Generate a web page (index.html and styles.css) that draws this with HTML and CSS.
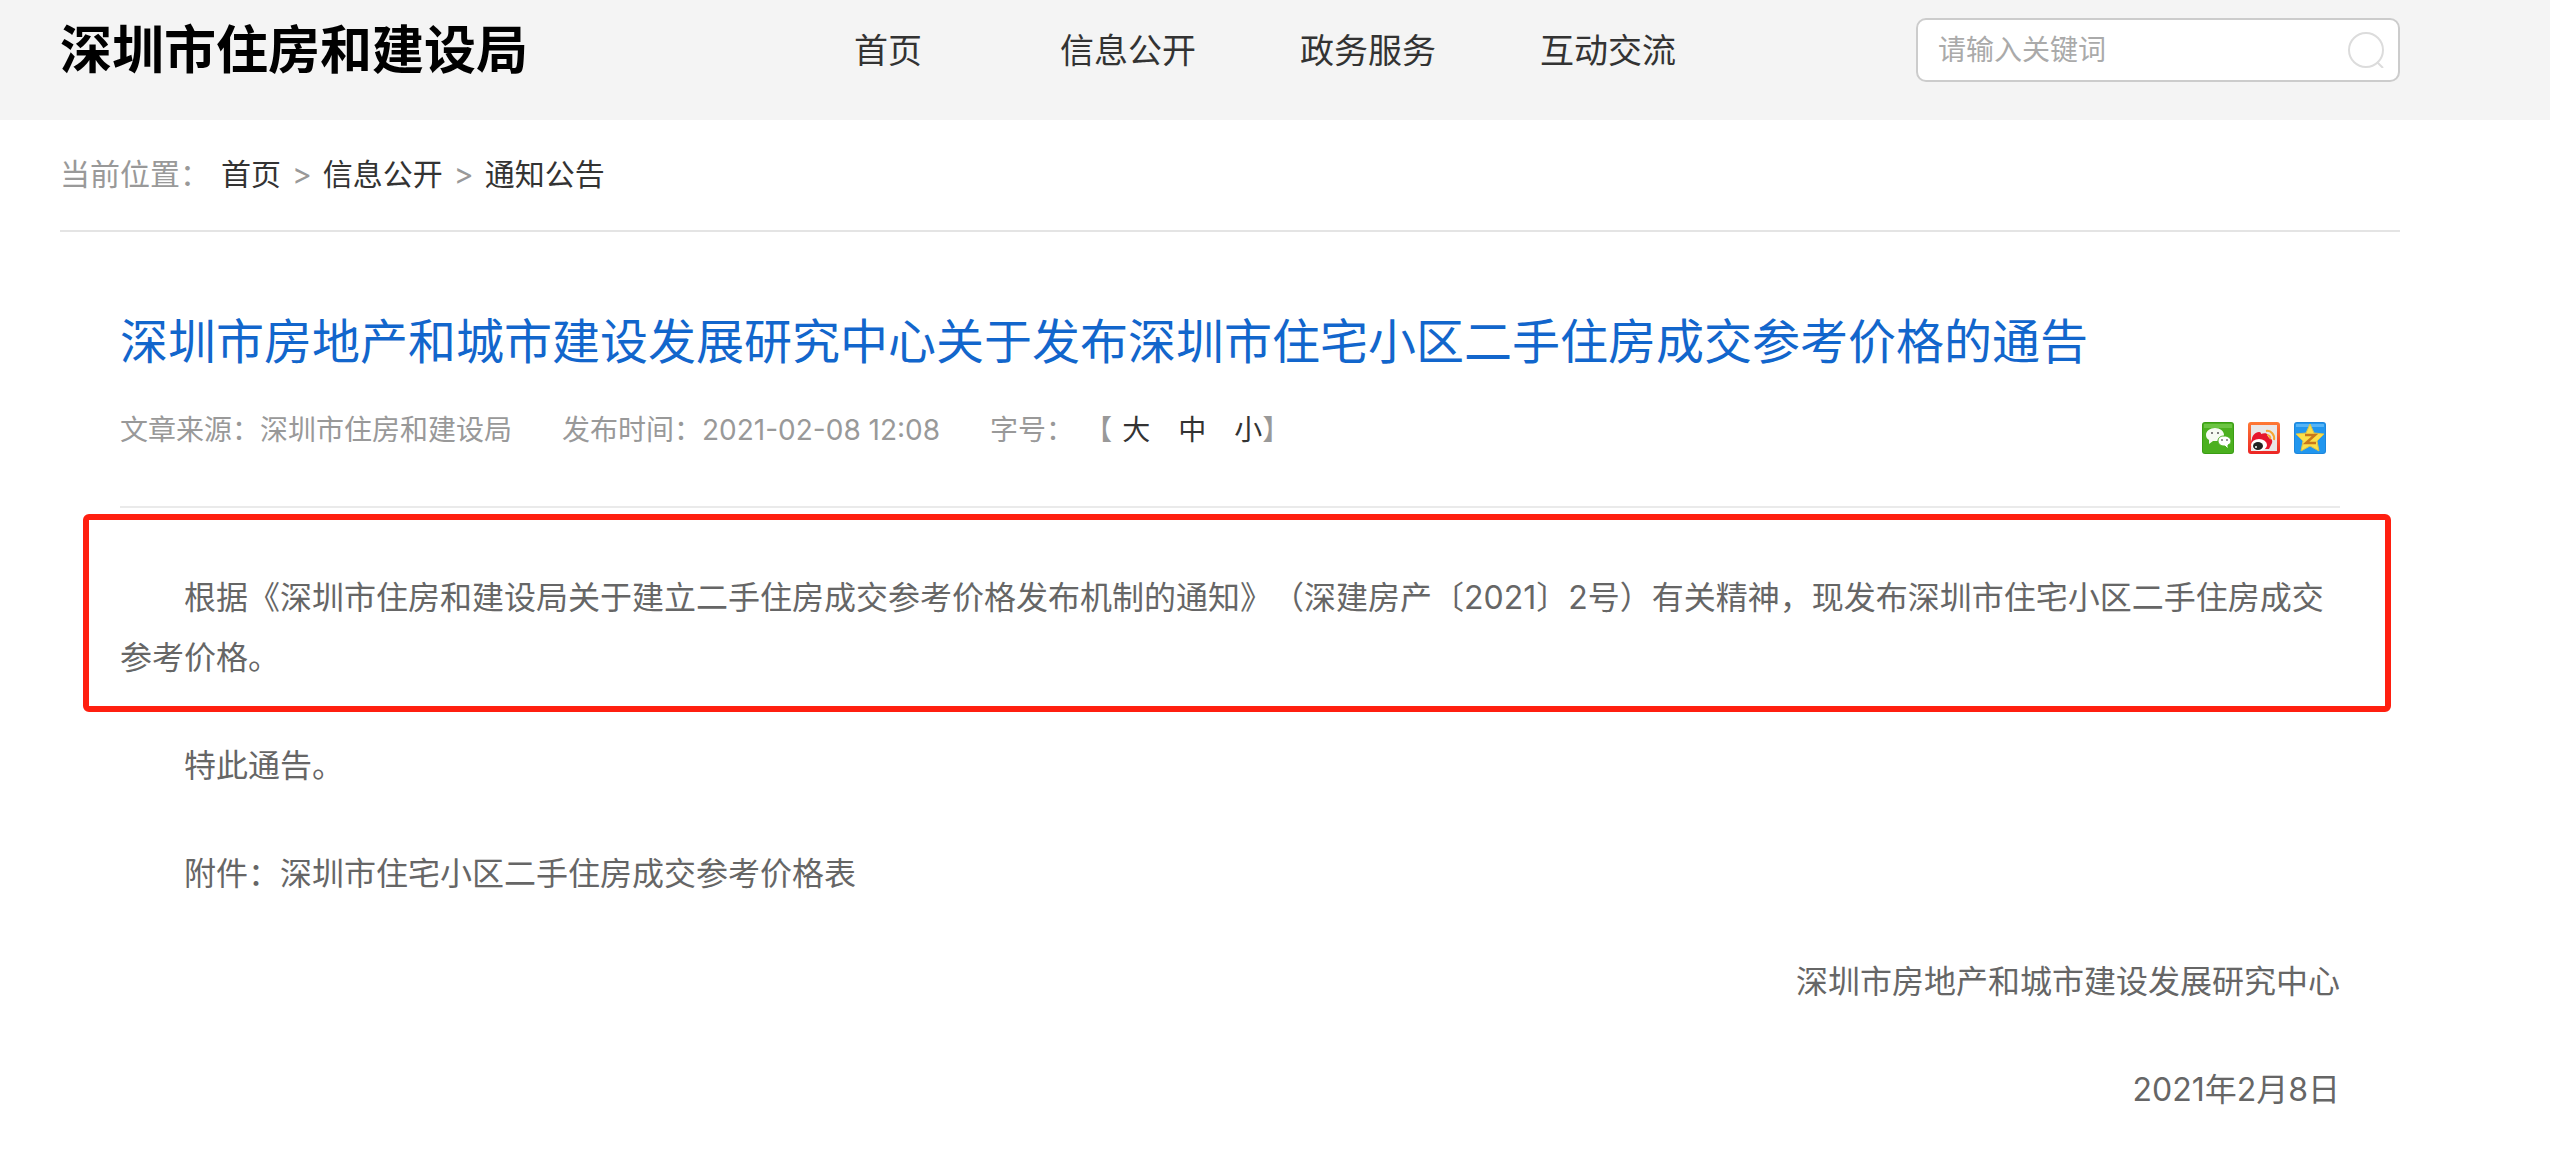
FILE: index.html
```html
<!DOCTYPE html>
<html lang="zh-CN">
<head>
  <meta charset="UTF-8" />
  <title>深圳市住房和建设局</title>
  <link rel="stylesheet" href="styles.css">
</head>
<body>
  <header class="header">
    <a class="logo" href="#">深圳市住房和建设局</a>
    <nav class="nav">
      <a href="#">首页</a>
      <a href="#">信息公开</a>
      <a href="#">政务服务</a>
      <a href="#">互动交流</a>
    </nav>
    <form class="search">
      <input type="text" placeholder="请输入关键词" aria-label="请输入关键词">
      <button type="button" aria-label="搜索">
        <svg viewBox="0 0 36 36" width="36" height="36" fill="none" stroke="#dcdcdc" stroke-width="2">
          <ellipse cx="18" cy="18" rx="17" ry="17"/>
          <path d="M29 30l6 6"/>
        </svg>
      </button>
    </form>
  </header>

  <main class="main">
    <div class="crumbs">
      <span>当前位置：</span>
      <a href="#">首页</a>
      <span>&gt;</span>
      <a href="#">信息公开</a>
      <span>&gt;</span>
      <a href="#">通知公告</a>
    </div>

    <article class="article">
      <h1>深圳市房地产和城市建设发展研究中心关于发布深圳市住宅小区二手住房成交参考价格的通告</h1>

      <div class="meta">
        <span>文章来源：深圳市住房和建设局</span>
        <span>发布时间：2021-02-08 12:08</span>
        <div class="font-size">
          <span>字号：</span>
          <span class="bracket">【</span>
          <div class="sizes">
            <button type="button">大</button>
            <button type="button">中</button>
            <button type="button">小</button>
          </div>
          <span>】</span>
        </div>
        <div class="share">
          <!-- wechat -->
          <a href="#" aria-label="微信">
            <svg viewBox="0 0 32 32" width="32" height="32">
              <rect width="32" height="32" rx="3" fill="#3a9d14"/>
              <rect x="1" y="1" width="30" height="30" rx="2" fill="#4bb01f"/>
              <path d="M2 2h28v4H2z" fill="#6cc443"/>
              <path d="M13 6c-5 0-9 3-9 7 0 2 1 4 3 5l0 4 4-3h4c4-1 7-3 7-6 0-4-4-7-9-7z" fill="#f6fbf3"/>
              <path d="M22 14c-4 0-6 2-6 5s3 5 6 5h1l3 3v-4c2-1 3-2 3-4 0-3-3-5-7-5z" fill="#fff" stroke="#4bb01f"/>
              <circle cx="10" cy="11" r="1" fill="#555"/>
              <circle cx="16" cy="11" r="1" fill="#555"/>
              <circle cx="20" cy="18" r="1" fill="#777"/>
              <circle cx="25" cy="18" r="1" fill="#777"/>
            </svg>
          </a>
          <!-- weibo -->
          <a href="#" aria-label="微博">
            <svg viewBox="0 0 32 32" width="32" height="32">
              <defs>
                <linearGradient id="weiboEdge" x1="0" y1="0" x2="0" y2="1">
                  <stop offset="0" stop-color="#ff7a35"/>
                  <stop offset="1" stop-color="#ec2525"/>
                </linearGradient>
              </defs>
              <rect width="32" height="32" rx="3" fill="url(#weiboEdge)"/>
              <rect x="3" y="3" width="26" height="26" fill="#e9e7e7"/>
              <path d="M4 17c0-3 3-7 7-7 2 0 2 1 2 2 3-1 6-1 7 1v2c3 1 5 3 4 6l-3 6H6c-3-1-4-6-2-10z" fill="#e6162d"/>
              <ellipse cx="11" cy="23" rx="8" ry="6" fill="#fff"/>
              <ellipse cx="10" cy="24" rx="5" ry="4" fill="#222"/>
              <circle cx="8" cy="25" r="1" fill="#fff"/>
              <path d="M18 9c5-1 9 4 8 9M19 13c2 0 4 2 3 4" fill="none" stroke="#f7a531" stroke-width="2"/>
            </svg>
          </a>
          <!-- qzone -->
          <a href="#" aria-label="QQ空间">
            <svg viewBox="0 0 32 32" width="32" height="32">
              <rect width="32" height="32" rx="3" fill="#1c86dc"/>
              <rect x="1" y="1" width="30" height="30" rx="2" fill="#2196ee"/>
              <path d="M2 2h28v3H2z" fill="#56b4f6"/>
              <path d="M16 2l4 9 10 1-7 7 2 10-9-5-9 5 2-10-7-7 10-1z" fill="#fcdf48" stroke="#d9c34c"/>
              <path d="M11 13h10l-9 8h10" fill="none" stroke="#c9781a" stroke-width="2.5"/>
            </svg>
          </a>
        </div>
      </div>

      <div class="content">
        <div class="highlight">
          <p>根据《深圳市住房和建设局关于建立二手住房成交参考价格发布机制的通知》（深建房产〔2021〕2号）有关精神，现发布深圳市住宅小区二手住房成交参考价格。</p>
        </div>
        <p>特此通告。</p>
        <p>附件：深圳市住宅小区二手住房成交参考价格表</p>
        <p class="sign">深圳市房地产和城市建设发展研究中心</p>
        <p class="sign">2021年2月8日</p>
      </div>
    </article>
  </main>
</body>
</html>
```
FILE: styles.css
```css
* {
  box-sizing: border-box;
}
body {
  margin: 0;
  background: #fff;
  color: #666;
  font-family: Inter, "Noto Sans CJK SC", sans-serif;
  font-size: 32px;
  text-spacing-trim: space-all;
}
a {
  color: #333;
  text-decoration: none;
}
button {
  padding: 0;
  border: none;
  background: none;
  font: inherit;
  color: #333;
  cursor: pointer;
}
svg {
  display: block;
}

.header {
  display: grid;
  grid-template-columns: 794fr 1062fr 484fr;
  align-items: center;
  padding: 18px 150px 38px 60px;
  background: #f4f4f4;
}
.logo {
  padding-top: 2px;
  font-size: 52px;
  font-weight: 700;
  line-height: 62px;
  color: #000;
  white-space: nowrap;
}
.nav {
  display: flex;
  gap: 104px;
  padding-top: 2px;
  font-size: 34px;
  line-height: 62px;
  white-space: nowrap;
}
.nav a:first-child {
  min-width: 102px;
}
.search {
  display: flex;
  align-items: center;
  min-width: 0;
  height: 64px;
  padding: 0 14px 0 20px;
  border: 2px solid #ccc;
  border-radius: 10px;
  background: #fff;
}
.search input {
  flex: 1;
  min-width: 0;
  padding: 0;
  border: none;
  outline: none;
  background: none;
  font: inherit;
  font-size: 28px;
}
.search input::placeholder {
  color: #aaa;
}

.main {
  margin: 0 150px 0 60px;
}
.crumbs {
  display: flex;
  gap: 11px;
  padding: 34px 0 36px;
  border-bottom: 2px solid #e4e4e4;
  font-size: 30px;
  line-height: 40px;
  color: #999;
}

.article {
  padding: 80px 60px 0;
}
h1 {
  margin: 0;
  font-size: 48px;
  font-weight: 400;
  line-height: 60px;
  color: #1266cc;
}
.meta {
  display: flex;
  gap: 50px;
  padding: 38px 14px 52px 0;
  border-bottom: 2px solid #eaeaea;
  font-size: 28px;
  line-height: 40px;
  color: #999;
}
.font-size {
  display: flex;
  align-items: baseline;
}
.bracket {
  margin: 0 10px;
}
.sizes {
  display: flex;
  gap: 28px;
}
.share {
  display: flex;
  gap: 14px;
  margin-left: auto;
  padding-top: 12px;
}

.content {
  padding-top: 6px;
  line-height: 60px;
}
.content p {
  margin: 0 0 48px;
  text-indent: 2em;
}
.content p:last-child {
  margin-bottom: 0;
}
/* red frame reaches past the text column on both sides */
.highlight {
  margin: 0 -51px 24px -37px;
  padding: 48px 45px 18px 31px;
  border: 6px solid #ff1f10;
  border-radius: 6px;
}
.content .sign {
  text-align: right;
}
```
